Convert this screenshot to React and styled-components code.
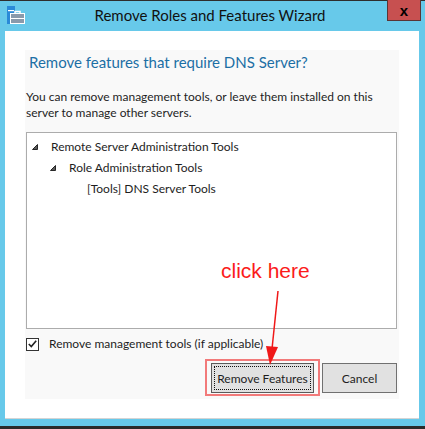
import React from 'react';
import styled, { createGlobalStyle } from 'styled-components';

const GlobalStyle = createGlobalStyle`
  html, body {
    margin: 0;
    padding: 0;
    width: 425px;
    height: 429px;
    overflow: hidden;
  }
  body {
    font-family: Lato, "Noto Sans", sans-serif;
  }
`;

const Window = styled.div`
  position: relative;
  width: 425px;
  height: 429px;
  box-sizing: border-box;
  background-color: #67c9ea;
  border-top: 1px solid #2e2e2e;
  border-bottom: 3px solid #2b2b2b;
  display: flex;
  flex-direction: column;
`;

const TitleBar = styled.div`
  height: 30px;
  display: flex;
  align-items: flex-start;
`;

const AppIcon = styled.svg`
  display: block;
  margin: 5px 0 0 7px;
  flex: none;
`;

const Title = styled.div`
  flex: 1;
  text-align: center;
  font-size: 15px;
  line-height: 28px;
  color: #111;
  padding-left: 8px;
`;

const CloseButton = styled.div`
  width: 32px;
  height: 20px;
  margin: -1px 4px 0 0;
  background-color: #c75050;
  border: 1px solid #5a3535;
  border-top: none;
  display: flex;
  align-items: center;
  justify-content: center;
  font-family: "Liberation Sans", Arial, sans-serif;
  font-weight: bold;
  font-size: 15px;
  line-height: 1;
  color: #000;
`;

const ClientArea = styled.div`
  margin: 0 6px 0 5px;
  height: 388px;
  box-sizing: border-box;
  background-color: #fff;
  border-bottom: 1px solid #d4d4d4;
  padding: 19px 20px 19px 20px;
  display: flex;
`;

const Panel = styled.div`
  flex: 1;
  background-color: #f9f9f9;
  display: flex;
  flex-direction: column;
  padding: 0 2px 0 1px;
`;

const Heading = styled.div`
  margin-top: 2px;
  padding-left: 3px;
  font-size: 15px;
  line-height: 20px;
  color: #1c6fa5;
  white-space: nowrap;
`;

const Description = styled.div`
  margin-top: 17px;
  font-size: 12px;
  line-height: 16px;
  color: #1e1e1e;
  white-space: nowrap;
`;

const TreeBox = styled.div`
  margin-top: 11px;
  height: 197px;
  box-sizing: border-box;
  background-color: #fff;
  border: 1px solid #acacac;
  padding-top: 3px;
`;

const TreeRow = styled.div`
  display: flex;
  align-items: center;
  height: 21px;
  padding-left: ${p => 5 + p.$level * 18}px;
  font-size: 12px;
  color: #1e1e1e;
  white-space: nowrap;
`;

const Expander = styled.span`
  width: 19px;
  flex: none;
  display: flex;
  align-items: center;
`;

const CheckRow = styled.label`
  margin-top: 8px;
  height: 14px;
  line-height: 14px;
  display: flex;
  align-items: center;
  gap: 10px;
  font-size: 12px;
  color: #1e1e1e;
`;

const CheckBox = styled.span`
  width: 13px;
  height: 13px;
  box-sizing: border-box;
  border: 1px solid #333;
  background-color: #fff;
  display: flex;
  align-items: center;
  justify-content: center;
`;

const ButtonRow = styled.div`
  margin-top: 12px;
  display: flex;
  justify-content: flex-end;
  gap: 8px;
`;

const Highlight = styled.span`
  position: relative;
  display: flex;

  &::after {
    content: '';
    position: absolute;
    left: -6px;
    right: -6px;
    top: -4px;
    bottom: -3px;
    border: 2px solid #f27a7a;
    pointer-events: none;
  }
`;

const Button = styled.button`
  height: 30px;
  width: ${p => p.$width}px;
  box-sizing: border-box;
  background-color: #e1e1e1;
  border: 1px solid ${p => (p.$focused ? '#5a5a5a' : '#707070')};
  font-family: Lato, "Noto Sans", sans-serif;
  font-size: 12px;
  color: #1e1e1e;
  padding: 0;
  outline: ${p => (p.$focused ? '1px dotted #111' : 'none')};
  outline-offset: -4px;
`;

const ClickHere = styled.div`
  position: absolute;
  left: 221px;
  top: 258px;
  font-family: "Liberation Sans", Arial, sans-serif;
  font-size: 21px;
  color: #fb1b1b;
`;

const Arrow = styled.svg`
  position: absolute;
  left: 262px;
  top: 286px;
  pointer-events: none;
`;

const Triangle = () => (
  <svg width="6" height="6" viewBox="0 0 6 6">
    <polygon points="5.5,0.5 5.5,5.5 0.5,5.5" fill="#595959" stroke="#262626" strokeWidth="1" />
  </svg>
);

const treeItems = [
  { label: 'Remote Server Administration Tools', level: 0, expanded: true },
  { label: 'Role Administration Tools', level: 1, expanded: true },
  { label: '[Tools] DNS Server Tools', level: 2, expanded: false },
];

const App = () => (
  <>
    <GlobalStyle />
    <Window>
      <TitleBar>
        <AppIcon width="18" height="20" viewBox="0 0 18 20">
          <rect x="0" y="0" width="8" height="18" fill="#2a8ad8" />
          <rect x="1" y="4" width="6" height="1.2" fill="#ffffff" />
          <rect x="3" y="7" width="15" height="11" fill="#ffffff" />
          <rect x="8" y="5.5" width="5" height="3" fill="none" stroke="#ffffff" strokeWidth="1.5" />
          <rect x="4" y="8" width="13" height="9" fill="#8a9aab" />
          <rect x="4" y="12" width="13" height="1" fill="#ffffff" />
        </AppIcon>
        <Title>Remove Roles and Features Wizard</Title>
        <CloseButton>x</CloseButton>
      </TitleBar>
      <ClientArea>
        <Panel>
          <Heading>Remove features that require DNS Server?</Heading>
          <Description>
            You can remove management tools, or leave them installed on this
            <br />
            server to manage other servers.
          </Description>
          <TreeBox>
            {treeItems.map((item, index) => (
              <TreeRow key={index} $level={item.level}>
                <Expander>{item.expanded && <Triangle />}</Expander>
                {item.label}
              </TreeRow>
            ))}
          </TreeBox>
          <CheckRow>
            <CheckBox>
              <svg width="9" height="8" viewBox="0 0 9 8">
                <polyline points="0.8,4 3.3,6.6 8.2,0.8" fill="none" stroke="#222" strokeWidth="1.6" />
              </svg>
            </CheckBox>
            Remove management tools (if applicable)
          </CheckRow>
          <ButtonRow>
            <Highlight>
              <Button $width={103} $focused>Remove Features</Button>
            </Highlight>
            <Button $width={75}>Cancel</Button>
          </ButtonRow>
        </Panel>
      </ClientArea>
      <ClickHere>click here</ClickHere>
      <Arrow width="20" height="80" viewBox="0 0 20 80">
        <line x1="16" y1="4" x2="10" y2="62" stroke="#f01818" strokeWidth="1.5" />
        <polygon points="4,59 16,60 8,78" fill="#f01818" />
      </Arrow>
    </Window>
  </>
);

export default App;
